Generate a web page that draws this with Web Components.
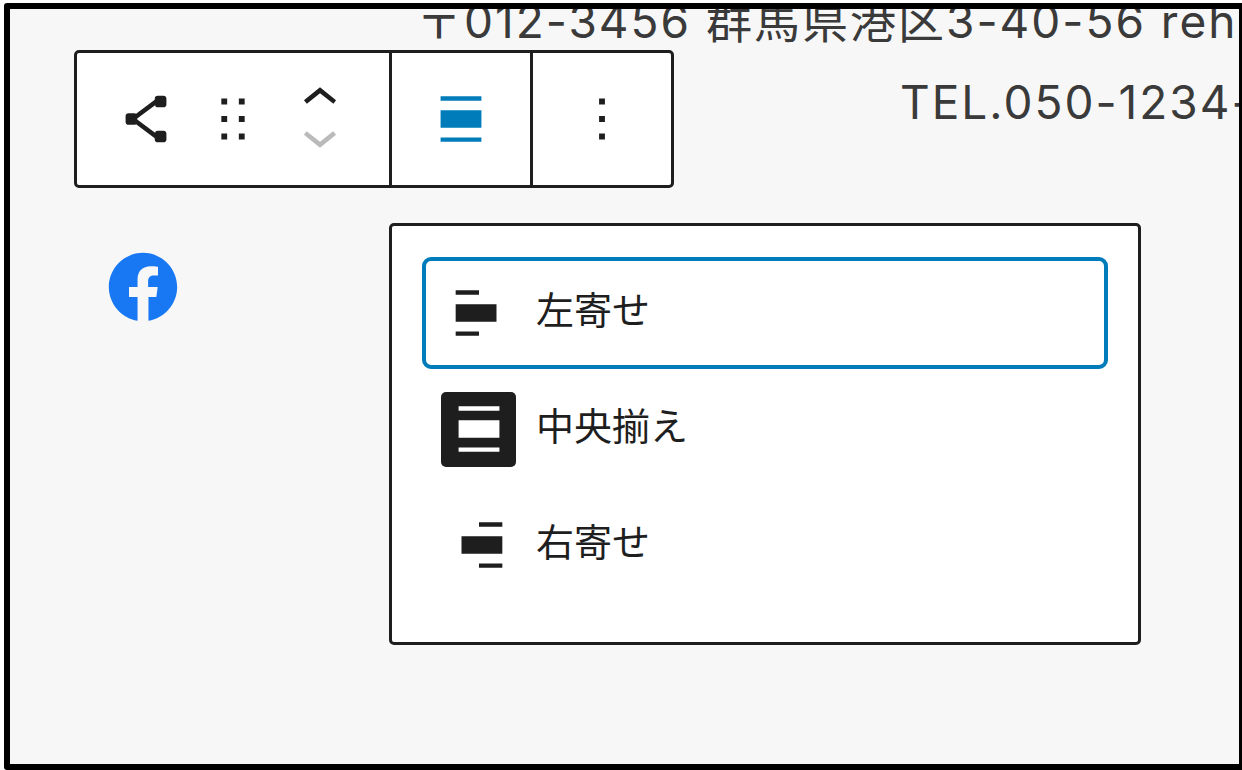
<!DOCTYPE html>
<html lang="ja">
<head>
<meta charset="utf-8">
<meta name="viewport" content="width=device-width, initial-scale=1">
<title>ブロックエディター</title>
<style>
  body {
    margin: 0;
    background: #ffffff;
    color: #1e1e1e;
    font-family: Inter, "Noto Sans CJK JP", sans-serif;
  }
</style>
</head>
<body>
<editor-canvas>
  <site-address slot="content">
    <span slot="address">〒012-3456 群馬県港区3-40-56 reh</span>
    <span slot="tel">TEL.050-1234-</span>
  </site-address>
  <social-links slot="content"></social-links>
  <block-toolbar slot="toolbar"></block-toolbar>
  <align-menu slot="popover">
    <align-item icon="left" focused>左寄せ</align-item>
    <align-item icon="center" checked>中央揃え</align-item>
    <align-item icon="right">右寄せ</align-item>
  </align-menu>
</editor-canvas>

<script>
const icons = {
  share: 'M9 11.8l6.1-4.5c.1.4.4.7.9.7h2c.6 0 1-.4 1-1V5c0-.6-.4-1-1-1h-2c-.6 0-1 .4-1 1v.4l-6.4 4.8c-.2-.1-.4-.2-.6-.2H6c-.6 0-1 .4-1 1v2c0 .6.4 1 1 1h2c.2 0 .4-.1.6-.2l6.4 4.8v.4c0 .6.4 1 1 1h2c.6 0 1-.4 1-1v-2c0-.6-.4-1-1-1h-2c-.5 0-.8.3-.9.7L9 12.2v-.4z',
  drag: 'M8 7h2V5H8v2zm0 6h2v-2H8v2zm0 6h2v-2H8v2zm6-14v2h2V5h-2zm0 8h2v-2h-2v2zm0 6h2v-2h-2v2z',
  up: 'M6.5 12.4L12 8l5.5 4.4-.9 1.2L12 10l-4.5 3.6-1-1.2z',
  down: 'M17.5 11.6L12 16l-5.5-4.4.9-1.2L12 14l4.5-3.6 1 1.2z',
  more: 'M13 19h-2v-2h2v2zm0-6h-2v-2h2v2zm0-6h-2V5h2v2z',
  left: 'M4 9v6h14V9H4zm8-4.8H4v1.5h8V4.2zM4 19.8h8v-1.5H4v1.5z',
  center: 'M5 15h14V9H5v6zm0 4.8h14v-1.5H5v1.5zM5 4.2v1.5h14V4.2H5z',
  right: 'M6 15h14V9H6v6zm6-10.8v1.5h8V4.2h-8zm0 15.6h8v-1.5h-8v1.5z',
  facebook: 'M12 2C6.5 2 2 6.5 2 12c0 5 3.7 9.1 8.4 9.9v-7H7.9V12h2.5V9.8c0-2.5 1.5-3.9 3.8-3.9 1.1 0 2.2.2 2.2.2v2.5h-1.3c-1.2 0-1.6.8-1.6 1.6V12h2.8l-.4 2.9h-2.3v7C18.3 21.1 22 17 22 12c0-5.5-4.5-10-10-10z'
};

const icon = (name) => `<svg viewBox="0 0 24 24" fill="currentColor" aria-hidden="true"><path d="${icons[name]}"/></svg>`;

class EditorCanvas extends HTMLElement {
  constructor() {
    super();
    this.attachShadow({ mode: 'open' });
  }
  connectedCallback() {
    this.shadowRoot.innerHTML = `
      <style>
        :host {
          display: block;
          box-sizing: border-box;
          position: relative;
          min-height: calc(100vh - 3px);
          margin: 3px 0 0 4px;
          border: 6px solid #000000;
          border-right-width: 3px;
          border-radius: 3px 0 0 3px;
          background: #f7f7f7;
          overflow: hidden;
        }
        /* The toolbar and its popover float over the page content. */
        .toolbar {
          position: absolute;
          top: 41px;
          left: 64px;
        }
        .popover {
          position: absolute;
          top: 214px;
          left: 379px;
          right: 98px;
        }
      </style>
      <slot name="content"></slot>
      <div class="toolbar"><slot name="toolbar"></slot></div>
      <div class="popover"><slot name="popover"></slot></div>
    `;
  }
}
customElements.define('editor-canvas', EditorCanvas);

class SiteAddress extends HTMLElement {
  constructor() {
    super();
    this.attachShadow({ mode: 'open' });
  }
  connectedCallback() {
    this.shadowRoot.innerHTML = `
      <style>
        :host {
          display: block;
          margin-top: -28px;
          color: #3a3a3a;
          font-size: 46px;
          line-height: 81px;
          letter-spacing: 2px;
          white-space: nowrap;
        }
        p {
          margin: 0;
        }
        .address {
          padding-left: 406px;
        }
        .tel {
          padding-left: 890px;
        }
      </style>
      <p class="address"><slot name="address"></slot></p>
      <p class="tel"><slot name="tel"></slot></p>
    `;
  }
}
customElements.define('site-address', SiteAddress);

class SocialLinks extends HTMLElement {
  constructor() {
    super();
    this.attachShadow({ mode: 'open' });
  }
  connectedCallback() {
    this.shadowRoot.innerHTML = `
      <style>
        :host {
          display: flex;
          padding: 103px 92px 0;
        }
        a {
          color: #1877f2;
        }
        svg {
          display: block;
          width: 82px;
          height: 82px;
        }
      </style>
      <a href="#facebook" aria-label="Facebook">${icon('facebook')}</a>
    `;
  }
}
customElements.define('social-links', SocialLinks);

class BlockToolbar extends HTMLElement {
  constructor() {
    super();
    this.attachShadow({ mode: 'open' });
  }
  connectedCallback() {
    this.setAttribute('role', 'toolbar');
    this.shadowRoot.innerHTML = `
      <style>
        :host {
          display: flex;
          border: 3px solid #1e1e1e;
          border-radius: 5px;
          background: #ffffff;
        }
        .group {
          display: flex;
          align-items: center;
          gap: 17px;
          height: 132px;
          padding: 0 34px;
        }
        .group + .group {
          border-left: 3px solid #1e1e1e;
        }
        button {
          display: flex;
          align-items: center;
          justify-content: center;
          width: 70px;
          height: 70px;
          padding: 0;
          border: 0;
          background: none;
          color: inherit;
          cursor: pointer;
        }
        svg {
          flex: none;
          width: 70px;
          height: 70px;
        }
        .mover {
          padding-bottom: 3px;
        }
        .mover button {
          height: 37px;
        }
        .mover svg {
          pointer-events: none;
        }
        button:disabled {
          opacity: 0.3;
          cursor: default;
        }
        .active {
          color: #007cba;
        }
      </style>
      <div class="group">
        <button type="button" aria-label="ソーシャルアイコン">${icon('share')}</button>
        <button type="button" aria-label="ドラッグ">${icon('drag')}</button>
        <div class="mover">
          <button type="button" aria-label="上に移動">${icon('up')}</button>
          <button type="button" aria-label="下に移動" disabled>${icon('down')}</button>
        </div>
      </div>
      <div class="group">
        <button type="button" class="active" aria-label="配置" aria-expanded="true">${icon('center')}</button>
      </div>
      <div class="group">
        <button type="button" aria-label="オプション">${icon('more')}</button>
      </div>
    `;
  }
}
customElements.define('block-toolbar', BlockToolbar);

class AlignMenu extends HTMLElement {
  constructor() {
    super();
    this.attachShadow({ mode: 'open' });
  }
  connectedCallback() {
    this.setAttribute('role', 'menu');
    this.shadowRoot.innerHTML = `
      <style>
        :host {
          display: flex;
          flex-direction: column;
          gap: 4px;
          padding: 31px 30px 41px;
          border: 3px solid #1e1e1e;
          border-radius: 5px;
          background: #ffffff;
        }
      </style>
      <slot></slot>
    `;
  }
}
customElements.define('align-menu', AlignMenu);

class AlignItem extends HTMLElement {
  constructor() {
    super();
    this.attachShadow({ mode: 'open' });
  }
  connectedCallback() {
    this.shadowRoot.innerHTML = `
      <style>
        :host {
          display: block;
        }
        button {
          display: flex;
          align-items: center;
          gap: 20px;
          box-sizing: border-box;
          width: 100%;
          height: 112px;
          padding: 0 15px;
          border: 4px solid transparent;
          border-radius: 9px;
          background: none;
          color: #1e1e1e;
          font-family: "Noto Sans CJK JP", sans-serif;
          font-size: 38px;
          line-height: 56px;
          text-align: left;
          cursor: pointer;
        }
        :host([focused]) button {
          border-color: #007cba;
        }
        .icon {
          display: flex;
          align-items: center;
          justify-content: center;
          width: 75px;
          height: 75px;
          border-radius: 5px;
        }
        :host([checked]) .icon {
          background: #1e1e1e;
          color: #ffffff;
        }
        svg {
          width: 70px;
          height: 70px;
        }
        .label {
          padding-bottom: 10px;
        }
      </style>
      <button type="button" role="menuitemradio" aria-checked="${this.hasAttribute('checked')}">
        <span class="icon">${icon(this.getAttribute('icon'))}</span>
        <span class="label"><slot></slot></span>
      </button>
    `;
  }
}
customElements.define('align-item', AlignItem);
</script>
</body>
</html>
